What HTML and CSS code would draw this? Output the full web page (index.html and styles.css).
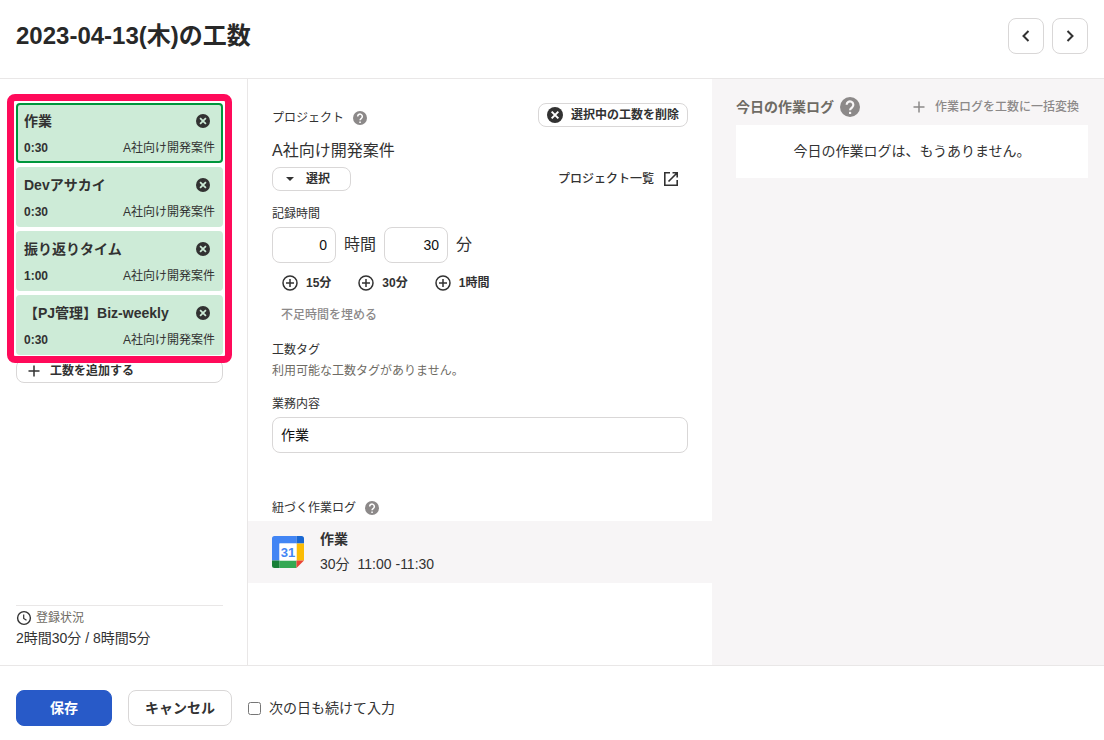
FILE: index.html
```html
<!DOCTYPE html>
<html lang="ja">
<head>
  <meta charset="UTF-8">
  <meta name="viewport" content="width=device-width, initial-scale=1.0">
  <title>2023-04-13(木)の工数</title>
  <link rel="stylesheet" href="styles.css">
</head>
<body>
  <!-- 共通アイコン -->
  <svg class="icon-defs" aria-hidden="true">
    <symbol id="icon-close" viewBox="0 0 24 24">
      <circle cx="12" cy="12" r="12" fill="currentColor"/>
      <path d="M7 7l10 10M17 7L7 17" fill="none" stroke="var(--hole)" stroke-width="3"/>
    </symbol>
    <symbol id="icon-help" viewBox="0 0 24 24">
      <circle cx="12" cy="12" r="12" fill="currentColor"/>
      <path d="M8 9.4a4 4 0 1 1 6.6 3c-1.4 1.2-2.5 1.7-2.5 3.6" fill="none" stroke="var(--hole)" stroke-width="2.6"/>
      <path d="M10.8 17.8h2.6v2.6h-2.6z" fill="var(--hole)"/>
    </symbol>
    <symbol id="icon-plus" viewBox="0 0 12 12">
      <path d="M6 .5v11M.5 6h11" fill="none" stroke="currentColor" stroke-width="1.5"/>
    </symbol>
    <symbol id="icon-plus-circle" viewBox="0 0 16 16">
      <circle cx="8" cy="8" r="7" fill="none" stroke="currentColor" stroke-width="1.5"/>
      <path d="M8 4v8M4 8h8" fill="none" stroke="currentColor" stroke-width="1.5"/>
    </symbol>
  </svg>

  <header class="header">
    <h1 class="header-title">2023-04-13(木)の工数</h1>
    <div class="header-nav">
      <button type="button" class="btn nav-btn" aria-label="前の日">
        <svg width="12" height="12" viewBox="0 0 12 12"><path d="M8.5 1L3.5 6l5 5" fill="none" stroke="currentColor" stroke-width="2"/></svg>
      </button>
      <button type="button" class="btn nav-btn" aria-label="次の日">
        <svg width="12" height="12" viewBox="0 0 12 12"><path d="M3.5 1l5 5-5 5" fill="none" stroke="currentColor" stroke-width="2"/></svg>
      </button>
    </div>
  </header>

  <main class="main">
    <!-- 左: 工数一覧 -->
    <section class="sidebar">
      <ul class="card-list">
        <li class="card selected">
          <div class="card-row">
            <span class="card-title">作業</span>
            <button type="button" class="card-close" aria-label="削除"><svg width="14" height="14"><use href="#icon-close"/></svg></button>
          </div>
          <div class="card-row card-meta"><span class="card-time">0:30</span><span>A社向け開発案件</span></div>
        </li>
        <li class="card">
          <div class="card-row">
            <span class="card-title">Devアサカイ</span>
            <button type="button" class="card-close" aria-label="削除"><svg width="14" height="14"><use href="#icon-close"/></svg></button>
          </div>
          <div class="card-row card-meta"><span class="card-time">0:30</span><span>A社向け開発案件</span></div>
        </li>
        <li class="card">
          <div class="card-row">
            <span class="card-title">振り返りタイム</span>
            <button type="button" class="card-close" aria-label="削除"><svg width="14" height="14"><use href="#icon-close"/></svg></button>
          </div>
          <div class="card-row card-meta"><span class="card-time">1:00</span><span>A社向け開発案件</span></div>
        </li>
        <li class="card">
          <div class="card-row">
            <span class="card-title">【PJ管理】Biz-weekly</span>
            <button type="button" class="card-close" aria-label="削除"><svg width="14" height="14"><use href="#icon-close"/></svg></button>
          </div>
          <div class="card-row card-meta"><span class="card-time">0:30</span><span>A社向け開発案件</span></div>
        </li>
      </ul>
      <button type="button" class="btn btn-small add-btn">
        <svg width="12" height="12"><use href="#icon-plus"/></svg>工数を追加する
      </button>

      <div class="status">
        <div class="status-label">
          <svg width="16" height="16" viewBox="0 0 16 16"><circle cx="8" cy="8" r="6.4" fill="none" stroke="#323232" stroke-width="1.4"/><path d="M7.7 4.5v4l2.8 1.8" fill="none" stroke="#323232" stroke-width="1.2"/></svg>
          登録状況
        </div>
        <div class="status-value">2時間30分 / 8時間5分</div>
      </div>
    </section>

    <!-- 中央: 工数の編集 -->
    <section class="editor">
      <div class="editor-row project-row">
        <span class="label">プロジェクト <svg class="help" width="14" height="14"><use href="#icon-help"/></svg></span>
        <button type="button" class="btn btn-small">
          <svg width="16" height="16"><use href="#icon-close"/></svg>選択中の工数を削除
        </button>
      </div>
      <p class="project-name">A社向け開発案件</p>
      <div class="editor-row">
        <button type="button" class="btn btn-small select-btn">
          <svg width="16" height="16" viewBox="0 0 16 16"><path d="M4 6h8l-4 4z" fill="currentColor"/></svg>選択
        </button>
        <a class="project-link" href="#">プロジェクト一覧
          <svg width="16" height="16" viewBox="0 0 16 16"><path d="M7 1.8H1.8v12.4h12.4V9M9.5 1.8h4.7v4.7M14 2L5.5 10.5" fill="none" stroke="currentColor" stroke-width="1.6"/></svg>
        </a>
      </div>

      <label class="label field-label" for="hours">記録時間</label>
      <div class="time-row">
        <input class="input time-input" id="hours" type="text" inputmode="numeric" value="0">
        <label for="hours">時間</label>
        <input class="input time-input" id="minutes" type="text" inputmode="numeric" value="30">
        <label for="minutes">分</label>
      </div>
      <div class="quick-row">
        <button type="button" class="text-btn quick-btn"><svg width="16" height="16"><use href="#icon-plus-circle"/></svg>15分</button>
        <button type="button" class="text-btn quick-btn"><svg width="16" height="16"><use href="#icon-plus-circle"/></svg>30分</button>
        <button type="button" class="text-btn quick-btn"><svg width="16" height="16"><use href="#icon-plus-circle"/></svg>1時間</button>
      </div>
      <button type="button" class="text-btn fill-btn" disabled>不足時間を埋める</button>

      <span class="label field-label">工数タグ</span>
      <p class="note">利用可能な工数タグがありません。</p>

      <label class="label field-label" for="content">業務内容</label>
      <input class="input content-input" id="content" type="text" value="作業">

      <span class="label log-label">紐づく作業ログ <svg class="help" width="14" height="14"><use href="#icon-help"/></svg></span>
      <div class="log">
        <svg width="32" height="32" viewBox="0 0 32 32">
          <path d="M2.5 0h22v7.5h-17v17H0v-22A2.5 2.5 0 0 1 2.5 0z" fill="#4285f4"/>
          <path d="M24.5 0h5A2.5 2.5 0 0 1 32 2.5v5h-7.5z" fill="#1967d2"/>
          <path d="M24.5 7.5H32v17h-7.5z" fill="#fbbc04"/>
          <path d="M7.5 24.5h17V32h-17z" fill="#34a853"/>
          <path d="M0 24.5h7.5V32h-5A2.5 2.5 0 0 1 0 29.5z" fill="#188038"/>
          <path d="M24.5 24.5H32L24.5 32z" fill="#ea4335"/>
          <path d="M7.5 7.5h17v17h-17z" fill="#fff"/>
          <text class="calendar-day" x="16" y="21" text-anchor="middle">31</text>
        </svg>
        <div>
          <div class="log-title">作業</div>
          <div class="log-time"><span>30分</span><span>11:00 -11:30</span></div>
        </div>
      </div>
    </section>

    <!-- 右: 今日の作業ログ -->
    <section class="worklog">
      <div class="worklog-head">
        <h2 class="worklog-title">今日の作業ログ <svg class="help" width="20" height="20"><use href="#icon-help"/></svg></h2>
        <button type="button" class="text-btn convert-btn" disabled><svg width="12" height="12"><use href="#icon-plus"/></svg>作業ログを工数に一括変換</button>
      </div>
      <p class="worklog-empty">今日の作業ログは、もうありません。</p>
    </section>
  </main>

  <footer class="footer">
    <button type="submit" class="btn btn-primary">保存</button>
    <button type="button" class="btn">キャンセル</button>
    <label class="next-day"><input type="checkbox">次の日も続けて入力</label>
  </footer>
</body>
</html>
```

FILE: styles.css
```css
:root {
  --text: #323232;
  --gray: #8c8989;
  --line: #e9e7e7;
  --border: #d9d7d7;
  --bg: #f7f5f6;
  --green: #cdebd7;
  --hole: #fff;
}

* {
  box-sizing: border-box;
}

body {
  margin: 0;
  min-height: 100vh;
  display: flex;
  flex-direction: column;
  font-family: "Liberation Sans", Arial, "Noto Sans CJK JP", sans-serif;
  font-size: 14px;
  line-height: 20px;
  color: var(--text);
  background: #fff;
}

h1, h2, p, ul {
  margin: 0;
  padding: 0;
}

svg {
  flex: none;
}

.icon-defs {
  position: absolute;
  width: 0;
  height: 0;
}

.help {
  color: var(--gray);
}

/* ボタン */
.btn {
  display: flex;
  align-items: center;
  justify-content: center;
  height: 36px;
  padding: 0 16px;
  border: 1px solid var(--border);
  border-radius: 8px;
  background: #fff;
  color: var(--text);
  font: bold 14px/20px "Liberation Sans", Arial, "Noto Sans CJK JP", sans-serif;
  cursor: pointer;
}

.btn-small {
  height: 24px;
  padding: 0 8px;
  gap: 8px;
  font-size: 12px;
}

.btn-primary {
  width: 96px;
  border-color: #285ac8;
  background: #285ac8;
  color: #fff;
}

.text-btn {
  display: flex;
  align-items: center;
  gap: 8px;
  height: 24px;
  padding: 0 9px;
  border: none;
  background: none;
  color: var(--text);
  font: bold 12px/20px "Liberation Sans", Arial, "Noto Sans CJK JP", sans-serif;
  cursor: pointer;
}

.text-btn:disabled {
  color: var(--gray);
  font-weight: 500;
  cursor: default;
}

/* ヘッダー */
.header {
  display: flex;
  align-items: center;
  justify-content: space-between;
  padding: 18px 16px 24px;
  border-bottom: 1px solid var(--line);
}

.header-title {
  font-size: 24px;
  line-height: 36px;
  color: #282828;
}

.header-nav {
  display: flex;
  gap: 8px;
}

.nav-btn {
  width: 36px;
  padding: 0;
}

.main {
  flex: 1;
  display: grid;
  grid-template-columns: 248px 1fr 392px;
}

/* 工数一覧 */
.sidebar {
  display: flex;
  flex-direction: column;
  padding: 24px 24px 17px 16px;
  border-right: 1px solid var(--line);
}

.card-list {
  position: relative;
  display: flex;
  flex-direction: column;
  gap: 4px;
  list-style: none;
}

/* 一覧を囲む強調枠 */
.card-list::after {
  content: "";
  position: absolute;
  inset: -9px -9px -8px;
  border: 7px solid #ff0a5a;
  border-radius: 8px;
  pointer-events: none;
}

.card {
  --hole: var(--green);
  display: flex;
  flex-direction: column;
  justify-content: space-between;
  height: 60px;
  padding: 6px 6px 3px;
  border: 2px solid var(--green);
  border-radius: 4px;
  background: var(--green);
}

.card.selected {
  border-color: #00963c;
}

.card-row {
  display: flex;
  align-items: center;
  justify-content: space-between;
}

.card-title {
  font-weight: bold;
}

.card-close {
  display: flex;
  margin-right: 5px;
  padding: 0;
  border: none;
  background: none;
  color: var(--text);
  cursor: pointer;
}

.card-meta {
  font-size: 12px;
}

.card-time {
  font-weight: bold;
}

.add-btn {
  justify-content: flex-start;
  margin-top: 4px;
  padding: 0 11px;
  gap: 10px;
}

.status {
  margin-top: auto;
  padding-top: 2px;
  border-top: 1px solid var(--line);
}

.status-label {
  display: flex;
  align-items: center;
  gap: 4px;
  font-size: 12px;
  color: #6e6b64;
}

/* 工数の編集 */
.editor {
  display: flex;
  flex-direction: column;
  padding: 24px 24px 0;
}

.editor-row {
  display: flex;
  align-items: center;
  justify-content: space-between;
}

.project-row {
  align-items: flex-end;
}

.project-row .label {
  line-height: 18px;
}

.label {
  display: flex;
  align-items: center;
  gap: 9px;
  font-size: 12px;
}

.project-name {
  margin: 13px 0 5px;
  font-size: 16px;
  line-height: 22px;
}

.select-btn {
  padding: 0 20px 0 9px;
}

.project-link {
  display: flex;
  align-items: center;
  gap: 9px;
  padding-right: 9px;
  color: var(--text);
  font-size: 12px;
  font-weight: 500;
  text-decoration: none;
}

.field-label {
  margin: 13px 0 3px;
}

.input {
  width: 100%;
  height: 36px;
  padding: 0 8px;
  border: 1px solid var(--border);
  border-radius: 8px;
  background: #fff;
  color: #111;
  font: 14px/20px "Liberation Sans", Arial, "Noto Sans CJK JP", sans-serif;
}

.content-input {
  padding-bottom: 2px;
}

.time-row {
  display: flex;
  align-items: center;
  gap: 8px;
  font-size: 16px;
}

.time-input {
  width: 64px;
  text-align: right;
}

.quick-row {
  display: flex;
  gap: 7px;
  margin: 8px 0;
}

.quick-btn {
  padding: 0 10px;
}

.fill-btn {
  align-self: flex-start;
}

.note {
  margin-top: -2px;
  font-size: 12px;
  color: #6e6b64;
}

.log-label {
  margin: 45px 0 3px;
}

.log {
  display: flex;
  align-items: center;
  gap: 16px;
  margin: 0 -24px;
  padding: 6px 24px;
  background: var(--bg);
}

.log > div {
  padding-bottom: 3px;
}

.calendar-day {
  font: bold 13px "Liberation Sans", Arial, sans-serif;
  fill: #4285f4;
}

.log-title {
  margin-bottom: 3px;
  line-height: 24px;
  font-weight: bold;
}

.log-time {
  display: flex;
  gap: 8px;
}

/* 今日の作業ログ */
.worklog {
  --hole: var(--bg);
  padding: 16px 16px 0 24px;
  background: var(--bg);
}

.worklog-head {
  display: flex;
  align-items: center;
  justify-content: space-between;
  margin-bottom: 6px;
}

.worklog-title {
  display: flex;
  align-items: center;
  gap: 6px;
  font-size: 14px;
  line-height: 24px;
  color: #6e6b64;
}

.convert-btn {
  gap: 10px;
}

.worklog-empty {
  padding: 16px;
  background: #fff;
  line-height: 21px;
  text-align: center;
}

/* フッター */
.footer {
  display: flex;
  align-items: center;
  gap: 16px;
  padding: 24px 16px 14px;
  border-top: 1px solid var(--line);
}

.next-day {
  display: flex;
  align-items: center;
  gap: 8px;
}

.next-day input {
  width: 13px;
  height: 13px;
  margin: 0;
}
```
